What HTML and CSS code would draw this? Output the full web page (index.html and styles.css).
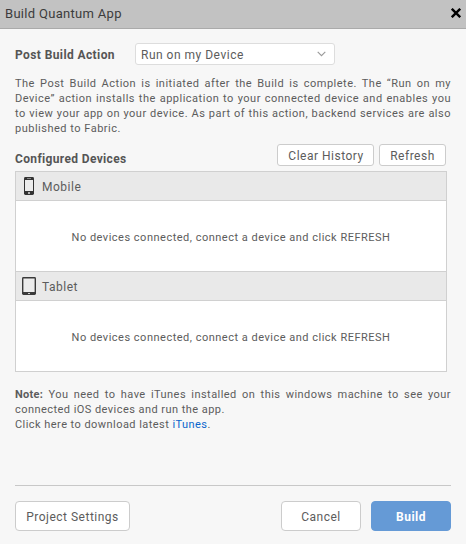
FILE: index.html
```html
<!DOCTYPE html>
<html lang="en">
<head>
<meta charset="utf-8">
<title>Build Quantum App</title>
<link rel="stylesheet" href="styles.css">
</head>
<body>
<div class="dialog">
  <header class="titlebar">
    <span class="title">Build Quantum App</span>
    <svg class="close" width="10" height="10" viewBox="0 0 10 10"><path d="M0.8 0.8L9.2 9.2M9.2 0.8L0.8 9.2" stroke="#000" stroke-width="2.4" fill="none"/></svg>
  </header>
  <main class="content">
    <div class="action-row">
      <span class="label label-action">Post Build Action</span>
      <div class="select">
        <span>Run on my Device</span>
        <svg width="9" height="6" viewBox="0 0 9 6"><path d="M0.7 0.8L4.5 4.6L8.3 0.8" stroke="#999" stroke-width="1.1" fill="none"/></svg>
      </div>
    </div>
    <p class="text description">The Post Build Action is initiated after the Build is complete. The “Run on my Device” action installs the application to your connected device and enables you to view your app on your device. As part of this action, backend services are also published to Fabric.</p>
    <div class="devices-row">
      <span class="label label-devices">Configured Devices</span>
      <div class="devices-actions">
        <button class="button button-small clear">Clear History</button>
        <button class="button button-small refresh">Refresh</button>
      </div>
    </div>
    <section class="devices">
      <div class="device-head">
        <svg width="16" height="20" viewBox="0 0 16 20"><rect x="3" y="1" width="10" height="18" rx="1.4" fill="#333"/><rect x="4" y="4" width="8" height="11" fill="#ececec"/><rect x="6" y="2" width="4" height="1" fill="#888"/><rect x="7" y="16" width="2" height="2" rx="1" fill="#ddd"/></svg>
        <span>Mobile</span>
      </div>
      <div class="device-body">No devices connected, connect a device and click REFRESH</div>
      <div class="device-head">
        <svg width="16" height="20" viewBox="0 0 16 20"><rect x="1" y="1" width="14" height="18" rx="1.4" fill="#3a3a3a"/><rect x="2.4" y="2.5" width="11.2" height="13.5" fill="#ececec"/><rect x="7" y="17" width="2" height="1" fill="#ccc"/></svg>
        <span>Tablet</span>
      </div>
      <div class="device-body">No devices connected, connect a device and click REFRESH</div>
    </section>
    <p class="text note"><b>Note:</b> You need to have iTunes installed on this windows machine to see your connected iOS devices and run the app.<br>Click here to download latest <a class="link">iTunes</a>.</p>
    <footer class="footer">
      <button class="button settings">Project Settings</button>
      <button class="button cancel">Cancel</button>
      <button class="button build">Build</button>
    </footer>
  </main>
</div>
</body>
</html>
```
FILE: styles.css
```css
* { box-sizing: border-box; }
body {
  margin: 0;
  font-family: Roboto, "Liberation Sans", sans-serif;
  font-size: 12px;
  letter-spacing: 0.5px;
  color: #5c5c5c;
  background: #f7f7f7;
}
.dialog { width: 466px; height: 544px; display: flex; flex-direction: column; background: #f7f7f7; }
.titlebar {
  height: 29px;
  flex: none;
  display: flex;
  align-items: center;
  justify-content: space-between;
  padding: 0 5px 1px;
  background: #c2c2c2;
  border-bottom: 1px solid #aaa;
  color: #3c3c3c;
  font-size: 13px;
  letter-spacing: 0.3px;
}
.close { display: block; margin-bottom: 1px; }
.content { flex: 1; display: flex; flex-direction: column; padding: 14px 15px 13px; }
.action-row { display: flex; align-items: center; height: 22px; }
.label { font-weight: 700; white-space: nowrap; color: #555; }
.label-action { width: 120px; padding-top: 2px; letter-spacing: 0.4px; }
.select {
  width: 200px;
  height: 22px;
  display: flex;
  align-items: center;
  justify-content: space-between;
  padding: 0 8px 0 5px;
  background: #fff;
  border: 1px solid #ddd;
  border-radius: 3px;
  white-space: nowrap;
}
.select span { padding-top: 2px; }
.text { margin: 0; font-size: 11px; line-height: 15px; text-align: justify; }
.description { margin-top: 11px; }
.devices-row { display: flex; justify-content: space-between; height: 22px; margin-top: 8px; padding-right: 5px; }
.label-devices { line-height: 30px; letter-spacing: 0.35px; }
.devices-actions { display: flex; gap: 5px; }
.button {
  height: 30px;
  padding: 2px 0 0;
  font: inherit;
  letter-spacing: inherit;
  color: #5c5c5c;
  background: #fff;
  border: 1px solid #ccc;
  border-radius: 4px;
  white-space: nowrap;
}
.button-small { height: 22px; border-radius: 3px; }
.clear { width: 97px; padding-left: 1px; }
.refresh { width: 67px; }
.devices { width: 432px; margin-top: 5px; border: 1px solid #d0d0d0; border-top: 0; background: #fff; }
.device-head {
  height: 30px;
  display: flex;
  align-items: center;
  gap: 5px;
  padding-left: 5px;
  background: #e9e9e9;
  border: solid #d0d0d0;
  border-width: 1px 0;
}
.device-head svg { display: block; }
.device-head span { padding-top: 2px; }
.device-body { height: 70px; line-height: 73px; text-align: center; font-size: 11px; }
.note { margin-top: 15px; letter-spacing: 0.45px; }
.note b { letter-spacing: 0.3px; }
.link { color: #0a66cc; }
.footer { display: flex; margin-top: auto; padding-top: 15px; border-top: 1px solid #c8c8c8; }
.settings { width: 115px; }
.cancel { width: 80px; margin-left: auto; }
.build { width: 80px; margin-left: 10px; background: #659ad6; border-color: #659ad6; color: #fff; font-weight: 700; }
```
